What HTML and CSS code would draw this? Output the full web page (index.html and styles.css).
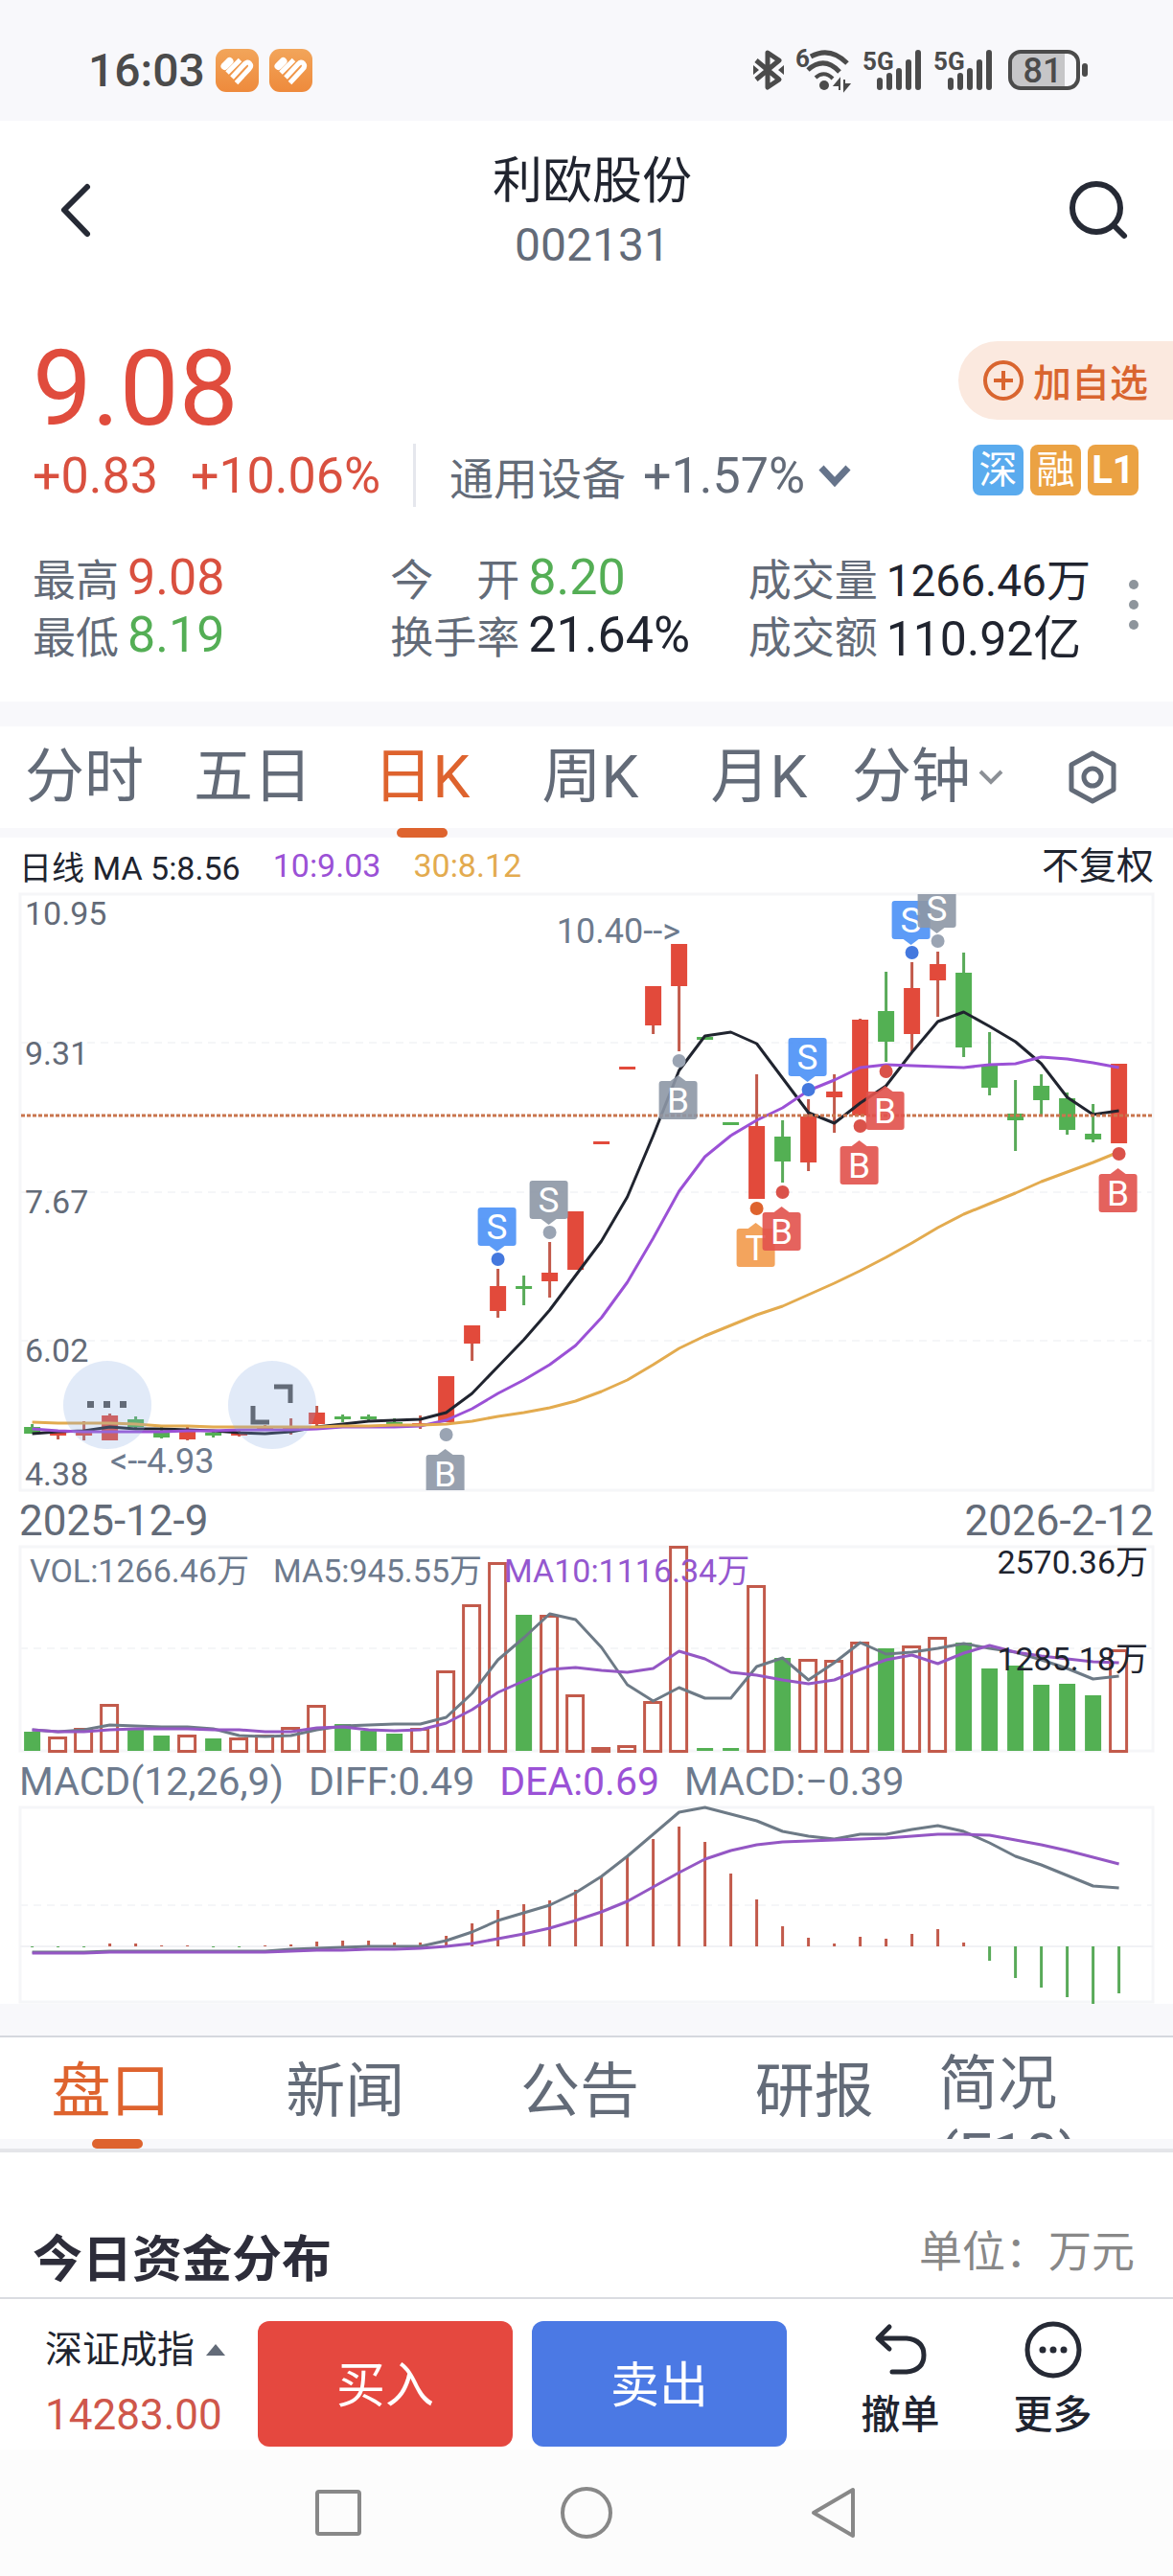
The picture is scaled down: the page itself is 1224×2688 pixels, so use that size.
FILE: index.html
```html
<!DOCTYPE html>
<html lang="zh-CN">
<head>
    <meta charset="UTF-8">
    <meta name="viewport" content="width=device-width, initial-scale=1.0">
    <title>利欧股份 002131</title>
    <link rel="stylesheet" href="styles.css">
</head>
<body>

    <!-- Status bar -->
    <div class="status-bar">
        <div class="status-left">
            <span class="clock">16:03</span>
            <svg class="app-icon" viewBox="0 0 45 45" aria-hidden="true">
                <defs>
                    <linearGradient id="appFill" x1="0" y1="0" x2="0" y2="1">
                        <stop offset="0" stop-color="#f2a55a"/>
                        <stop offset="1" stop-color="#ee8a3c"/>
                    </linearGradient>
                </defs>
                <rect width="45" height="45" rx="11" fill="url(#appFill)"/>
                <g stroke="#fff" stroke-width="5" fill="none">
                    <path d="M9.500 18 L14.500 13" stroke-width="8" stroke-linecap="round"/>
                    <path d="M12 25 L25.500 11.500"/>
                    <path d="M17 30 L30 16 Q33.500 12.500 35.500 15 Q38 18 35 21 L21.500 35.500"/>
                </g>
            </svg>
            <svg class="app-icon" viewBox="0 0 45 45" aria-hidden="true">
                <rect width="45" height="45" rx="11" fill="url(#appFill)"/>
                <g stroke="#fff" stroke-width="5" fill="none">
                    <path d="M9.500 18 L14.500 13" stroke-width="8" stroke-linecap="round"/>
                    <path d="M12 25 L25.500 11.500"/>
                    <path d="M17 30 L30 16 Q33.500 12.500 35.500 15 Q38 18 35 21 L21.500 35.500"/>
                </g>
            </svg>
        </div>
        <div class="status-right">
            <svg class="bluetooth" viewBox="0 0 32 42" aria-hidden="true">
                <path d="M3 11 L27 31 L15 39 V3 L27 11 L3 31" fill="none" stroke="#4b4b4b" stroke-width="5" stroke-linejoin="round"/>
                <path d="M0 16 L6 21 L0 26 Z M32 16 L26 21 L32 26 Z" fill="#4b4b4b"/>
            </svg>
            <svg class="wifi" viewBox="0 0 58 44" aria-hidden="true">
                <text x="0" y="19" class="icon-text">6</text>
                <g fill="none" stroke="#4b4b4b" stroke-width="5">
                    <path d="M16 8 Q36 -3 54 15"/>
                    <path d="M13 22 Q30 7 46 24"/>
                    <path d="M21 30 Q30 22 39 31" stroke-width="4"/>
                </g>
                <circle cx="30" cy="38" r="5" fill="#4b4b4b"/>
                <path d="M46 43 V32 L41 38 H46 M51 32 V43 L56 37 H51" fill="#4b4b4b" stroke="#4b4b4b" stroke-width="2"/>
            </svg>
            <svg class="signal" viewBox="0 0 62 42" aria-hidden="true">
                <text x="0" y="21" class="icon-text">5G</text>
                <path d="M18 39 V32 M28 39 V27 M38 39 V22 M48 39 V13 M58 39 V3" stroke="#4b4b4b" stroke-width="6" stroke-linecap="round"/>
            </svg>
            <svg class="signal" viewBox="0 0 62 42" aria-hidden="true">
                <text x="0" y="21" class="icon-text">5G</text>
                <path d="M18 39 V32 M28 39 V27 M38 39 V22 M48 39 V13 M58 39 V3" stroke="#4b4b4b" stroke-width="6" stroke-linecap="round"/>
            </svg>
            <svg class="battery" viewBox="0 0 84 42" aria-label="电量 81">
                <path d="M13 4 H59 V38 H13 Q4 38 4 29 V13 Q4 4 13 4 Z" fill="#c6c6c8"/>
                <rect x="2" y="2" width="71" height="38" rx="11" fill="none" stroke="#4b4b4b" stroke-width="4"/>
                <rect x="77" y="14" width="6" height="14" rx="3" fill="#4b4b4b"/>
                <text x="36" y="34" text-anchor="middle" class="battery-text">81</text>
            </svg>
        </div>
    </div>

    <!-- Page header -->
    <header class="header">
        <button class="icon-btn" aria-label="返回">
            <svg viewBox="0 0 60 60" class="header-icon"><path d="M39 6 L15 30 L39 55" fill="none" stroke="#262a35" stroke-width="6" stroke-linecap="round" stroke-linejoin="round"/></svg>
        </button>
        <div class="header-title">
            <h1>利欧股份</h1>
            <span>002131</span>
        </div>
        <button class="icon-btn" aria-label="搜索">
            <svg viewBox="0 0 60 60" class="header-icon"><circle cx="28" cy="28" r="25" fill="none" stroke="#262a35" stroke-width="6"/><path d="M46 46 L57 57" stroke="#262a35" stroke-width="6" stroke-linecap="round"/></svg>
        </button>
    </header>

    <!-- Quote -->
    <section class="quote">
        <div class="quote-top">
            <div class="price">9.08</div>
            <button class="add-btn">
                <svg viewBox="0 0 42 42" class="add-icon"><circle cx="21" cy="21" r="19" fill="none" stroke="#d9652f" stroke-width="4"/><path d="M21 11 V31 M11 21 H31" stroke="#d9652f" stroke-width="4"/></svg>
                加自选
            </button>
        </div>
        <div class="change-row">
            <span class="red">+0.83</span>
            <span class="red">+10.06%</span>
            <button class="industry">
                <span class="industry-name">通用设备</span>
                <span>+1.57%</span>
                <svg viewBox="0 0 34 24" class="industry-arrow"><path d="M3 4 L17 19 L31 4" fill="none" stroke="#66748b" stroke-width="7"/></svg>
            </button>
            <div class="badges">
                <span class="badge blue">深</span>
                <span class="badge">融</span>
                <span class="badge strong">L1</span>
            </div>
        </div>
        <div class="stats">
            <div class="stat"><span>最高</span><b class="red">9.08</b></div>
            <div class="stat"><span>今　开</span><b class="green">8.20</b></div>
            <div class="stat"><span>成交量</span><b class="volume">1266.46万</b></div>
            <div class="stat"><span>最低</span><b class="green">8.19</b></div>
            <div class="stat"><span>换手率</span><b>21.64%</b></div>
            <div class="stat"><span>成交额</span><b class="amount">110.92亿</b></div>
            <button class="more-dots" aria-label="更多行情"><i></i><i></i><i></i></button>
        </div>
    </section>

    <!-- Chart period -->
    <nav class="period-tabs">
        <a href="#">分时</a>
        <a href="#">五日</a>
        <a href="#" class="active">日K</a>
        <a href="#">周K</a>
        <a href="#">月K</a>
        <a href="#">分钟<svg viewBox="0 0 26 18" class="minute-arrow"><path d="M2 3 L13 14 L24 3" fill="none" stroke="#8c9096" stroke-width="4"/></svg></a>
        <button class="setting" aria-label="设置">
            <svg viewBox="0 0 52 56"><path d="M26 3 L48 15 V41 L26 53 L4 41 V15 Z" fill="none" stroke="#636b78" stroke-width="5" stroke-linejoin="round"/><circle cx="26" cy="28" r="9" fill="none" stroke="#636b78" stroke-width="5"/></svg>
        </button>
    </nav>

    <!-- Charts -->
    <section class="charts">
        <div class="legend">
            <span>日线 MA 5:8.56</span>
            <span class="purple">10:9.03</span>
            <span class="yellow">30:8.12</span>
            <a href="#" class="adjust">不复权</a>
        </div>
        <div class="k-wrap">
            <svg id="kChart" class="chart" viewBox="0 0 1224 626"></svg>
            <button class="float-btn first" aria-label="更多指标">
                <svg viewBox="0 0 92 92"><path d="M25 42 h7 v7 h-7 Z M42 42 h7 v7 h-7 Z M59 42 h7 v7 h-7 Z" fill="#636b78"/></svg>
            </button>
            <button class="float-btn second" aria-label="全屏">
                <svg viewBox="0 0 92 92"><path d="M48 27 H65 V44 M26 47 V64 H43" fill="none" stroke="#636b78" stroke-width="5"/></svg>
            </button>
        </div>
        <div class="dates">
            <span>2025-12-9</span>
            <span>2026-2-12</span>
        </div>
        <svg id="volChart" class="chart" viewBox="0 0 1224 220"></svg>
        <div class="macd-legend">
            <span>MACD(12,26,9)</span>
            <span>DIFF:0.49</span>
            <span class="purple">DEA:0.69</span>
            <span>MACD:−0.39</span>
        </div>
        <svg id="macdChart" class="chart" viewBox="0 0 1224 207"></svg>
    </section>

    <!-- Info tabs -->
    <nav class="info-tabs">
        <a href="#" class="active">盘口</a>
        <a href="#">新闻</a>
        <a href="#">公告</a>
        <a href="#">研报</a>
        <a href="#" class="brief">简况(F10)</a>
    </nav>

    <section class="funds">
        <h2>今日资金分布</h2>
        <span>单位：万元</span>
    </section>

    <!-- Trade bar -->
    <footer class="trade-bar">
        <button class="index">
            <span class="index-name">深证成指 <i></i></span>
            <span class="index-value">14283.00</span>
        </button>
        <button class="trade buy">买入</button>
        <button class="trade sell">卖出</button>
        <div class="tools">
            <button class="tool">
                <svg viewBox="0 0 60 60"><path d="M18 6 L6 18 L18 29 M7 18 H36 Q54 20 54 35.500 Q54 51 36 53 H21" fill="none" stroke="#262a35" stroke-width="5" stroke-linecap="round" stroke-linejoin="round"/></svg>
                撤单
            </button>
            <button class="tool">
                <svg viewBox="0 0 60 60"><circle cx="30" cy="30" r="27" fill="none" stroke="#262a35" stroke-width="5"/><g fill="#262a35"><circle cx="19" cy="30" r="3.500"/><circle cx="30" cy="30" r="3.500"/><circle cx="41" cy="30" r="3.500"/></g></svg>
                更多
            </button>
        </div>
    </footer>

    <!-- System navigation -->
    <div class="system-nav">
        <button aria-label="最近任务"><svg viewBox="0 0 56 56"><rect x="6" y="6" width="44" height="44" rx="2" fill="none" stroke="#888" stroke-width="4"/></svg></button>
        <button aria-label="主页"><svg viewBox="0 0 56 56"><circle cx="28" cy="28" r="25" fill="none" stroke="#888" stroke-width="4"/></svg></button>
        <button aria-label="返回上一页"><svg viewBox="0 0 56 56"><path d="M47 4 V52 L6 28 Z" fill="none" stroke="#888" stroke-width="4" stroke-linejoin="round"/></svg></button>
    </div>

    <script src="chart.js"></script>
</body>
</html>
```

FILE: styles.css
```css
/* General */
* {
    box-sizing: border-box;
}

body {
    margin: 0;
    background: #fff;
    color: #20242f;
    font-family: Roboto, "Noto Sans CJK SC", sans-serif;
}

button {
    margin: 0;
    padding: 0;
    border: none;
    background: none;
    color: inherit;
    font-family: inherit;
    cursor: pointer;
}

a {
    color: inherit;
    text-decoration: none;
}

svg {
    display: block;
    overflow: visible;
}

.red {
    color: #d9503f;
}

.green {
    color: #54ae55;
}

.purple {
    color: #9b51d6;
}

.yellow {
    color: #e3ab4f;
}

/* Status bar */
.status-bar {
    display: flex;
    justify-content: space-between;
    align-items: center;
    height: 126px;
    padding: 20px 88px 0 92px;
    background: #f8f8fb;
    color: #4b4b4b;
}

.status-left,
.status-right {
    display: flex;
    align-items: center;
}

.status-left {
    gap: 11px;
}

.clock {
    font-size: 48px;
    font-weight: 500;
}

.app-icon {
    width: 45px;
    height: 45px;
}

.status-right {
    gap: 12px;
}

.bluetooth {
    width: 32px;
    height: 42px;
}

.wifi {
    width: 58px;
    height: 44px;
}

.signal {
    width: 62px;
    height: 42px;
}

.battery {
    width: 84px;
    height: 42px;
    margin-left: 4px;
}

.icon-text {
    font-size: 26px;
    font-weight: 700;
    fill: #4b4b4b;
}

.battery-text {
    font-size: 36px;
    font-weight: 500;
    fill: #4b4b4b;
}

/* Header */
.header {
    display: flex;
    justify-content: space-between;
    align-items: center;
    height: 186px;
    padding: 0 48px 0 52px;
}

.header-icon {
    width: 60px;
    height: 60px;
}

.header-title {
    display: flex;
    flex-direction: column;
    align-items: center;
    padding: 6px 0 0 8px;
}

.header-title h1 {
    margin: 0;
    font-size: 52px;
    font-weight: 400;
    line-height: 68px;
}

.header-title span {
    color: #636b78;
    font-size: 48px;
    line-height: 64px;
}

/* Quote */
.quote {
    padding: 44px 0 40px 34px;
}

.quote-top {
    display: flex;
    justify-content: space-between;
    align-items: flex-start;
    height: 98px;
}

.price {
    color: #e04c3d;
    font-size: 110px;
    line-height: 100px;
}

.add-btn {
    display: flex;
    align-items: center;
    gap: 10px;
    height: 82px;
    padding: 0 26px;
    border-radius: 41px 0 0 41px;
    background: #fbe9df;
    color: #d9652f;
    font-size: 40px;
    font-weight: 500;
}

.add-icon {
    width: 42px;
    height: 42px;
}

.change-row {
    display: flex;
    align-items: center;
    height: 84px;
    padding-right: 36px;
    font-size: 52px;
}

.change-row > .red {
    margin-right: 34px;
}

.industry {
    display: flex;
    align-items: center;
    height: 66px;
    padding-left: 35px;
    border-left: 3px solid #e5e7ed;
    color: #636b78;
    font-size: 52px;
}

.industry-name {
    margin-right: 18px;
    font-size: 46px;
}

.industry-arrow {
    width: 34px;
    height: 24px;
    margin-left: 14px;
}

.badges {
    display: flex;
    gap: 7px;
    margin-left: auto;
    padding-bottom: 12px;
}

.badge {
    width: 53px;
    border-radius: 8px;
    background: #eba243;
    color: #fff;
    font-size: 40px;
    line-height: 53px;
    text-align: center;
}

.badge.blue {
    background: #5aabee;
}

.badge.strong {
    font-weight: 700;
}

.stats {
    display: grid;
    grid-template-columns: 373fr 373fr 409fr;
    position: relative;
    margin-top: 34px;
    padding-right: 34px;
}

.stat {
    display: flex;
    align-items: center;
    gap: 9px;
    height: 60px;
    white-space: nowrap;
}

.stat span {
    color: #636b78;
    font-size: 45px;
}

.stat b {
    font-size: 52px;
    font-weight: 400;
}

.stat .volume {
    font-size: 46px;
}

.stat .amount {
    font-size: 50px;
}

/* Three dots over the right edge of the stats */
.more-dots {
    display: flex;
    flex-direction: column;
    gap: 11px;
    position: absolute;
    top: 33px;
    right: 36px;
}

.more-dots i {
    width: 10px;
    height: 10px;
    border-radius: 50%;
    background: #8e959c;
}

/* Period tabs */
.period-tabs {
    display: grid;
    grid-template-columns: repeat(6, 176fr) 168fr;
    height: 142px;
    border-top: 26px solid #f8f8fb;
    border-bottom: 10px solid #f8f8fb;
    color: #636b78;
    font-size: 62px;
    line-height: 106px;
    text-align: center;
}

.period-tabs a {
    display: flex;
    justify-content: center;
    align-items: center;
    position: relative;
    white-space: nowrap;
}

.active {
    color: #de632e;
}

.active::after {
    content: "";
    position: absolute;
    left: 50%;
    bottom: -10px;
    width: 53px;
    height: 10px;
    margin-left: -26px;
    border-radius: 5px;
    background: #de632e;
}

.minute-arrow {
    width: 26px;
    height: 18px;
    margin-left: 8px;
}

.setting {
    display: flex;
    justify-content: center;
    align-items: center;
}

.setting svg {
    width: 52px;
    height: 56px;
}

/* Charts */
.legend {
    display: flex;
    align-items: center;
    gap: 34px;
    height: 58px;
    padding: 0 20px;
    font-size: 34px;
}

.adjust {
    margin-left: auto;
    padding-bottom: 6px;
    font-size: 39px;
}

.k-wrap {
    position: relative;
}

.chart {
    width: 100%;
    height: auto;
}

.frame {
    fill: none;
    stroke: #f5f6f8;
    stroke-width: 3;
}

.grid {
    stroke: #f5f6f8;
    stroke-width: 2;
    stroke-dasharray: 8 6;
}

.zero {
    stroke: #f1f2f5;
    stroke-width: 2;
}

.last-price {
    stroke: #c9754e;
    stroke-width: 3;
    stroke-dasharray: 4 2;
}

.line {
    fill: none;
    stroke-width: 3;
    stroke-linejoin: round;
}

.axis {
    fill: #636b78;
    font-size: 34px;
}

.axis.note {
    fill: #6d7a8d;
}

.axis.peak {
    font-size: 36px;
}

.axis.dark {
    fill: #20242f;
}

.axis.violet {
    fill: #9457cf;
}

.flag {
    fill: #fff;
    font-size: 37px;
    text-anchor: middle;
}

.float-btn {
    position: absolute;
    top: 78%;
    width: 92px;
    height: 92px;
    border-radius: 50%;
    background: rgba(135, 171, 227, 0.25);
}

.float-btn.first {
    left: 66px;
}

.float-btn.second {
    left: 238px;
}

.dates {
    display: flex;
    justify-content: space-between;
    height: 54px;
    padding: 0 20px;
    color: #636b78;
    font-size: 44px;
    line-height: 58px;
}

.macd-legend {
    display: flex;
    gap: 26px;
    height: 52px;
    padding: 0 20px;
    color: #6d7a8d;
    font-size: 41px;
    line-height: 54px;
}

/* Info tabs */
.info-tabs {
    display: grid;
    grid-template-columns: repeat(5, 1fr);
    height: 122px;
    margin-top: 33px;
    border-top: 2px solid #d5d8de;
    border-bottom: 4px solid #e4e5e9;
    background: linear-gradient(#fff 106px, #f8f8fb 106px);
    box-shadow: 0 -33px 0 #f8f8fb;
    color: #636b78;
    font-size: 62px;
    line-height: 106px;
}

.info-tabs a {
    position: relative;
    height: 106px;
    padding: 4px 14px 0 0;
    text-align: center;
}

.info-tabs .brief {
    padding: 12px 0 0;
    line-height: 74px;
    text-align: left;
    overflow: hidden;
    overflow-wrap: anywhere;
}

/* Funds */
.funds {
    display: flex;
    justify-content: space-between;
    align-items: center;
    height: 151px;
    padding: 64px 40px 0 34px;
}

.funds h2 {
    margin: 0;
    color: #2d2d3a;
    font-size: 52px;
    font-weight: 700;
}

.funds span {
    padding-bottom: 14px;
    color: #888;
    font-size: 45px;
}

/* Trade bar */
.trade-bar {
    display: grid;
    grid-template-columns: 222fr 266fr 266fr 337fr;
    column-gap: 20px;
    height: 159px;
    padding: 23px 46px 3px 27px;
    border-top: 2px solid #dadce1;
}

.index {
    display: flex;
    flex-direction: column;
    justify-content: space-between;
    padding: 0 0 0 20px;
    text-align: left;
}

.index-name {
    display: flex;
    align-items: center;
    gap: 12px;
    font-size: 39px;
    line-height: 60px;
    white-space: nowrap;
}

.index-name i {
    border: 10px solid transparent;
    border-top: none;
    border-bottom: 12px solid #636b78;
}

.index-value {
    color: #cf574b;
    font-size: 44px;
    line-height: 66px;
}

.trade {
    padding-bottom: 6px;
    border-radius: 12px;
    color: #fff;
    font-size: 51px;
}

.buy {
    background: #e5483f;
}

.sell {
    background: #4b79e4;
}

.tools {
    display: grid;
    grid-template-columns: 1fr 1fr;
    column-gap: 20px;
    padding: 0 10px 0 29px;
}

.tool {
    display: flex;
    flex-direction: column;
    justify-content: space-between;
    align-items: center;
    font-size: 41px;
    font-weight: 500;
    line-height: 66px;
}

.tool svg {
    width: 60px;
    height: 60px;
}

/* System navigation */
.system-nav {
    display: flex;
    justify-content: center;
    align-items: center;
    gap: 203px;
    height: 132px;
    background: #fcfcfc;
}

.system-nav svg {
    width: 56px;
    height: 56px;
}
```

FILE: chart.js
```js
const RED = "#e24a3b";
const RED_LINE = "#c25a4b";
const GREEN = "#53b053";

// [type, high, body top, body bottom, low]
const candles = [
    ["g", 554, 557, 564, 564], ["r", 562, 563, 565, 570], ["r", 551, 563, 565, 571], ["r", 543, 545, 571, 571],
    ["g", 546, 549, 557, 560], ["g", 556, 563, 568, 569], ["r", 557, 560, 570, 571], ["g", 561, 563, 565, 568],
    ["r", 561, 563, 565, 567], ["r", 555, 556, 559, 559], ["r", 548, 558, 560, 565], ["r", 535, 542, 554, 560],
    ["g", 544, 546, 549, 552], ["g", 544, 546, 549, 552], ["g", 548, 552, 555, 555], ["r", 545, 553, 555, 559],
    ["r", 504, 504, 552, 552], ["r", 451, 451, 470, 488], ["r", 392, 410, 436, 443], ["g", 399, 410, 413, 430],
    ["r", 364, 396, 405, 422], ["r", 332, 332, 393, 393], ["r", 259, 259, 262, 262], ["r", 181, 181, 184, 184],
    ["r", 97, 97, 138, 147], ["r", 53, 53, 97, 165], ["g", 150, 150, 153, 153], ["g", 239, 239, 242, 242],
    ["r", 189, 243, 319, 319], ["g", 237, 254, 280, 302], ["r", 215, 233, 281, 290], ["r", 189, 207, 213, 250],
    ["r", 131, 132, 232, 232], ["g", 82, 123, 155, 176], ["r", 72, 99, 147, 165], ["r", 61, 74, 91, 129],
    ["g", 62, 83, 161, 171], ["g", 145, 180, 203, 211], ["g", 195, 230, 237, 269], ["g", 189, 201, 216, 232],
    ["g", 208, 214, 247, 252], ["g", 220, 251, 257, 260], ["r", 178, 178, 261, 261]
];

const ma5 = [564, 562, 561, 557, 559, 559, 560, 561, 563, 564, 562, 557, 554, 551, 550, 549, 542, 522, 494, 466, 435, 399, 363, 317, 253, 185, 149, 145, 157, 193, 229, 240, 219, 201, 166, 134, 124, 139, 155, 178, 213, 231, 227];
const ma10 = [559, 561, 562, 562, 562, 562, 561, 561, 560, 560, 560, 559, 557, 557, 557, 556, 550, 538, 522, 508, 492, 472, 443, 406, 360, 311, 275, 253, 237, 224, 206, 195, 182, 179, 180, 181, 182, 179, 178, 171, 173, 177, 182];
const ma30 = [552, 553, 553, 553, 554, 556, 556, 557, 557, 557, 557, 557, 556, 556, 555, 555, 554, 551, 546, 542, 537, 530, 520, 508, 492, 475, 462, 451, 440, 431, 419, 407, 394, 380, 365, 349, 335, 324, 313, 301, 291, 281, 270];

// [candle index, letter, dot y, flag colour, dot colour]
const flags = [
    [16, "B", 565, "#8d97a6", "#9aa4b3"],
    [18, "S", 382, "#4b91f7", "#4478de"],
    [20, "S", 354, "#8d97a6", "#9aa4b3"],
    [25, "B", 175, "#8d97a6", "#9aa4b3"],
    [28, "T", 329, "#f29b4c", "#de632e"],
    [29, "B", 312, "#e2524c", "#da524a"],
    [30, "S", 205, "#4b91f7", "#4478de"],
    [32, "B", 243, "#e2524c", "#da524a"],
    [33, "B", 186, "#e2524c", "#da524a"],
    [34, "S", 62, "#4b91f7", "#4478de"],
    [35, "S", 50, "#8d97a6", "#9aa4b3"],
    [42, "B", 272, "#e2524c", "#da524a"]
];

const volumes = [195, 200, 191, 166, 193, 199, 198, 202, 201, 198, 190, 167, 187, 194, 197, 191, 131, 62, 18, 73, 73, 156, 211, 209, 163, 1, 212, 212, 42, 118, 119, 120, 101, 108, 105, 96, 102, 129, 126, 146, 145, 157, 109];
const volMa5 = [193, 195, 193, 188, 189, 190, 190, 192, 199, 200, 199, 193, 189, 188, 187, 187, 180, 155, 120, 97, 72, 78, 107, 146, 163, 149, 160, 160, 127, 118, 141, 123, 102, 114, 112, 108, 103, 108, 112, 120, 129, 140, 137];
const volMa10 = [193, 195, 195, 193, 192, 192, 192, 193, 193, 195, 195, 191, 190, 193, 194, 193, 186, 172, 154, 142, 130, 128, 131, 133, 129, 111, 119, 133, 136, 141, 145, 141, 130, 120, 115, 124, 113, 105, 112, 116, 119, 122, 123];

const macd = [148, 148, 148, 144, 144, 146, 146, 148, 148, 146, 145, 142, 141, 141, 143, 143, 136, 123, 109, 103, 99, 88, 74, 54, 35, 22, 38, 71, 98, 126, 138, 144, 137, 139, 134, 129, 143, 162, 180, 190, 200, 207, 196];
const diff = [153, 153, 153, 152, 152, 152, 152, 152, 152, 152, 150, 149, 148, 147, 147, 147, 141, 132, 120, 112, 104, 91, 74, 53, 30, 7, 2, 9, 16, 27, 32, 35, 30, 30, 25, 21, 27, 39, 53, 62, 73, 84, 86];
const dea = [154, 154, 154, 153, 153, 153, 153, 153, 153, 153, 152, 151, 151, 150, 150, 149, 147, 144, 139, 134, 128, 120, 111, 100, 85, 70, 56, 47, 41, 38, 37, 36, 35, 34, 32, 30, 30, 31, 36, 41, 47, 54, 61];

// Centre of candle i
function cx(i) {
    return 33.6 + i * 27;
}

function line(values, color) {
    const points = values.map((y, i) => `${cx(i)},${y}`).join(" ");
    return `<polyline class="line" stroke="${color}" points="${points}"/>`;
}

function grid(y) {
    return `<line class="grid" x1="21" x2="1203" y1="${y}" y2="${y}"/>`;
}

function label(x, y, text, cls = "", anchor = "start") {
    return `<text class="axis ${cls}" x="${x}" y="${y}" text-anchor="${anchor}">${text}</text>`;
}

function drawFlag([i, letter, y, color, dot]) {
    const x = cx(i) - 1;
    const above = letter === "S";
    const top = above ? y - 54 : y + 21;
    const tip = above
        ? `M${x - 8} ${top + 40} L${x} ${top + 46} L${x + 8} ${top + 40} Z`
        : `M${x - 8} ${top} L${x} ${top - 6} L${x + 8} ${top} Z`;
    return `
        <circle cx="${cx(i)}" cy="${y}" r="7" fill="${dot}"/>
        <g opacity="0.9">
            <rect x="${x - 20}" y="${top}" width="40" height="40" rx="3" fill="${color}"/>
            <path d="${tip}" fill="${color}"/>
        </g>
        <text class="flag" x="${x}" y="${top + 33}">${letter}</text>
    `;
}

function drawK() {
    let html = `<rect class="frame" x="21" y="1" width="1182" height="622"/>` + grid(156) + grid(312) + grid(467);
    html += label(26, 33, "10.95") + label(26, 179, "9.31") + label(26, 334, "7.67") + label(26, 489, "6.02") + label(26, 618, "4.38");
    candles.forEach(([type, high, top, bottom, low], i) => {
        const fill = type === "r" ? RED : GREEN;
        const wick = type === "r" ? RED_LINE : "#59aa59";
        html += `<path d="M${cx(i)} ${high} V${low}" stroke="${wick}" stroke-width="3"/>`;
        html += `<rect x="${cx(i) - 8.5}" y="${top}" width="17" height="${Math.max(bottom - top, 3)}" fill="${fill}"/>`;
    });
    html += line(ma5, "#20242f") + line(ma10, "#9b51d6") + line(ma30, "#e3ab4f");
    html += `<line class="last-price" x1="22" x2="1203" y1="232" y2="232"/>`;
    html += label(710, 52, "10.40-->", "note peak", "end") + label(115, 605, "&lt;--4.93", "note peak");
    html += `<clipPath id="kClip"><rect x="21" y="1" width="1182" height="622"/></clipPath>`;
    html += `<g clip-path="url(#kClip)">${flags.map(drawFlag).join("")}</g>`;
    document.getElementById("kChart").innerHTML = html;
}

function drawVolume() {
    let html = `<rect class="frame" x="21" y="2" width="1182" height="213"/>` + grid(108);
    html += label(31, 39, "VOL:1266.46万", "note") + label(285, 39, "MA5:945.55万", "note");
    volumes.forEach((y, i) => {
        if (candles[i][0] === "r") {
            html += `<rect x="${cx(i) - 9}" y="${y + 1.5}" width="17" height="${Math.max(214 - y, 3)}" fill="none" stroke="${RED_LINE}" stroke-width="3"/>`;
        } else {
            html += `<rect x="${cx(i) - 8.5}" y="${y}" width="17" height="${215 - y}" fill="${GREEN}"/>`;
        }
    });
    html += line(volMa5, "#6d7a86") + line(volMa10, "#9457c4");
    html += label(526, 39, "MA10:1116.34万", "violet");
    html += label(1198, 30, "2570.36万", "dark", "end") + label(1198, 131, "1285.18万", "dark", "end");
    document.getElementById("volChart").innerHTML = html;
}

function drawMacd() {
    let html = `<rect class="frame" x="21" y="2" width="1182" height="203"/>` + grid(104);
    html += `<line class="zero" x1="21" x2="1203" y1="147" y2="147"/>`;
    macd.forEach((y, i) => {
        html += `<path d="M${cx(i)} 147 V${y}" stroke="${y < 147 ? RED_LINE : "#59aa59"}" stroke-width="3"/>`;
    });
    html += line(diff, "#6d7a86") + line(dea, "#9457c4");
    document.getElementById("macdChart").innerHTML = html;
}

drawK();
drawVolume();
drawMacd();
```
